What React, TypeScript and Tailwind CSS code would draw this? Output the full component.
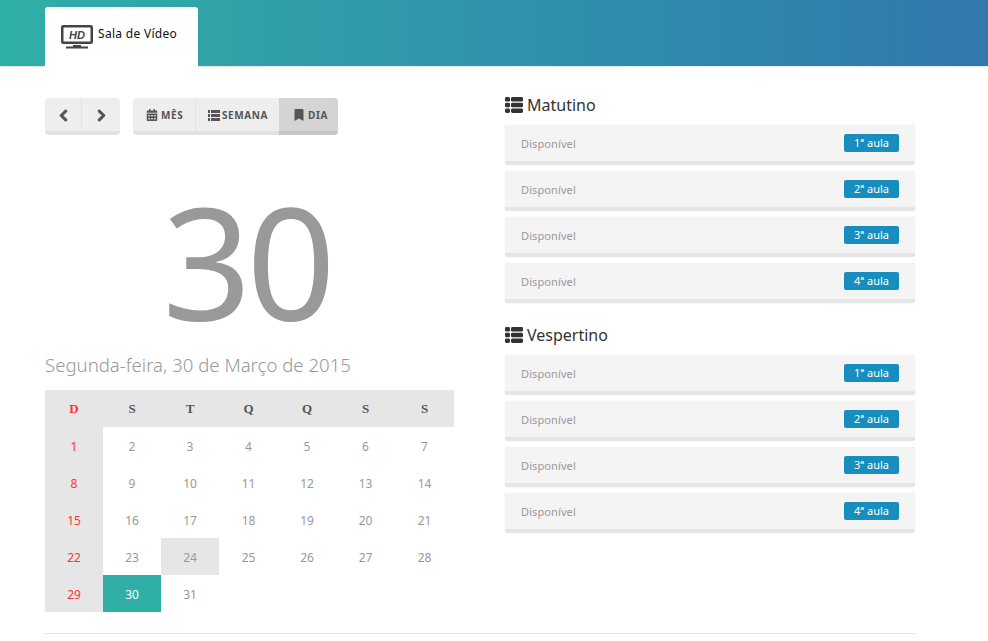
import { FaBookmark, FaCalendarAlt, FaChevronLeft, FaChevronRight } from "react-icons/fa";

const headers = ["D", "S", "T", "Q", "Q", "S", "S"];
const weeks = [
  [1, 2, 3, 4, 5, 6, 7],
  [8, 9, 10, 11, 12, 13, 14],
  [15, 16, 17, 18, 19, 20, 21],
  [22, 23, 24, 25, 26, 27, 28],
  [29, 30, 31, 0, 0, 0, 0],
];
const aulas = ["1ª aula", "2ª aula", "3ª aula", "4ª aula"];

function HdIcon() {
  return (
    <svg width="33" height="25" viewBox="0 0 33 25">
      <rect x="1.25" y="1.25" width="29.5" height="16.5" rx="1" fill="none" stroke="#444" strokeWidth="2.5" />
      <rect x="12" y="20" width="8" height="2" fill="#444" />
      <rect x="5" y="21.5" width="22" height="2" fill="#444" />
      <text x="16" y="14" textAnchor="middle" fontFamily="'Liberation Sans', sans-serif" fontWeight="700" fontStyle="italic" fontSize="11" fill="#444">
        HD
      </text>
    </svg>
  );
}

function RowsIcon() {
  return (
    <svg width="18" height="16" viewBox="0 0 18 16" fill="#333">
      <rect x="0" y="0" width="5" height="4.6" rx="1.4" />
      <rect x="6" y="0" width="12" height="4.6" rx="1.4" />
      <rect x="0" y="5.7" width="5" height="4.6" rx="1.4" />
      <rect x="6" y="5.7" width="12" height="4.6" rx="1.4" />
      <rect x="0" y="11.4" width="5" height="4.6" rx="1.4" />
      <rect x="6" y="11.4" width="12" height="4.6" rx="1.4" />
    </svg>
  );
}

function ListIcon() {
  return (
    <svg width="12" height="11" viewBox="0 0 12 11" fill="#555">
      <rect x="0" y="0" width="2" height="3" />
      <rect x="3" y="0" width="9" height="3" />
      <rect x="0" y="4" width="2" height="3" />
      <rect x="3" y="4" width="9" height="3" />
      <rect x="0" y="8" width="2" height="3" />
      <rect x="3" y="8" width="9" height="3" />
    </svg>
  );
}

function Periodo({ title }: { title: string }) {
  return (
    <div>
      <h3 className="flex items-center gap-[4px] h-[20px] text-[16px] leading-[20px] text-[#333]">
        <RowsIcon />
        {title}
      </h3>
      <div className="mt-[10px] flex flex-col gap-[6px]">
        {aulas.map((a) => (
          <div
            key={a}
            className="flex items-center justify-between h-[40px] px-[16px] bg-[#f4f4f4] border-b-4 border-[#e5e5e5] rounded-[3px] shadow-[0_0_1px_rgba(0,0,0,0.15)]"
          >
            <span className="mt-[3px] text-[11px] text-[#999] tracking-[0.1px]">Disponível</span>
            <span className="flex items-center justify-center w-[55px] h-[18px] bg-[#178ebd] rounded-[2px] text-[11px] text-white">
              {a}
            </span>
          </div>
        ))}
      </div>
    </div>
  );
}

export default function App() {
  return (
    <div className="min-h-[641px] bg-white font-['Noto_Sans','Liberation_Sans',sans-serif]">
      <header className="h-[67px] pt-[7px] pl-[45px] border-b border-[#e5e5e5] bg-gradient-to-r from-[#2fafa6] to-[#3178ae]">
        <div className="flex items-start gap-[4px] w-[153px] h-[60px] pl-[16px] pt-[18px] bg-white rounded-t-[3px]">
          <HdIcon />
          <span className="mt-[1px] text-[12px] leading-[16px] tracking-[0.3px] text-[#111]">Sala de Vídeo</span>
        </div>
      </header>

      <main className="flex w-[870px] mx-[45px] pt-[31px]">
        <section className="w-[409px]">
          <div className="flex gap-[13px]">
            <div className="flex h-[37px] rounded-[4px] border-b-4 border-[#e2e2e2] bg-[#eee] text-[#555]">
              <button className="flex items-center justify-center w-[37px] pt-[1px] border-r border-[#e2e2e2]">
                <FaChevronLeft size={13} stroke="currentColor" strokeWidth={40} />
              </button>
              <button className="flex items-center justify-center w-[38px] pt-[1px]">
                <FaChevronRight size={13} stroke="currentColor" strokeWidth={40} />
              </button>
            </div>
            <div className="flex h-[37px] text-[10px] font-bold tracking-[0.6px] text-[#555]">
              <button className="flex items-center gap-[3px] w-[63px] pl-[13px] pt-[1px] bg-[#eee] border-b-4 border-[#e2e2e2] border-r border-r-[#e2e2e2] rounded-l-[4px]">
                <FaCalendarAlt size={12} />
                MÊS
              </button>
              <button className="flex items-center gap-[2px] w-[83px] pl-[12px] pt-[1px] bg-[#eee] border-b-4 border-[#e2e2e2]">
                <ListIcon />
                SEMANA
              </button>
              <button className="flex items-center gap-[3px] w-[59px] pl-[14px] pt-[1px] bg-[#d4d4d4] border-b-4 border-[#c6c6c6] rounded-r-[4px]">
                <FaBookmark size={12} />
                DIA
              </button>
            </div>
          </div>

          <div className="mt-[34px] h-[182px] pr-[6px] text-center text-[156px] leading-[182px] tracking-[-5px] text-[#999]">30</div>
          <p className="h-[28px] text-[18.6px] leading-[28px] font-light text-[#999]">Segunda-feira, 30 de Março de 2015</p>

          <div className="mt-[11px] grid grid-cols-[58px_58px_58px_59px_58px_59px_59px] text-center">
            {headers.map((h, i) => (
              <div
                key={i}
                className={`flex items-center justify-center h-[37px] bg-[#e6e6e6] text-[13px] font-bold font-['Liberation_Serif',serif] ${
                  i === 0 ? "text-[#f33]" : "text-[#555]"
                }`}
              >
                {h}
              </div>
            ))}
            {weeks.flat().map((d, i) => {
              let tone = "text-[#999]";
              if (i % 7 === 0) tone = "bg-[#e6e6e6] text-[#f33]";
              if (d === 24) tone = "bg-[#e6e6e6] text-[#999]";
              if (d === 30) tone = "bg-[#2fafa6] text-white";
              return (
                <div key={i} className={`flex items-center justify-center h-[37px] pt-[2px] text-[12px] ${tone}`}>
                  {d > 0 ? d : ""}
                </div>
              );
            })}
          </div>
        </section>

        <section className="-mt-[3px] ml-[51px] w-[410px] flex flex-col gap-[22px]">
          <Periodo title="Matutino" />
          <Periodo title="Vespertino" />
        </section>
      </main>

      <div className="w-[870px] mx-[45px] mt-[21px] border-t border-[#e5e5e5]" />
    </div>
  );
}
